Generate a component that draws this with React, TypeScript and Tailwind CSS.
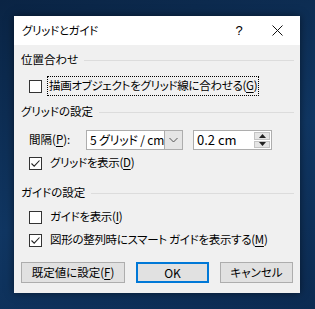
import React from 'react';

const font = "font-['Yu_Gothic_UI','Noto_Sans_CJK_JP',sans-serif] [font-feature-settings:'palt'] whitespace-nowrap";

function Box({ checked }: { checked?: boolean }) {
    return (
        <span className="w-[13px] h-[13px] border border-[#333333] bg-white flex items-center justify-center shrink-0">
            {checked && (
                <svg width="11" height="11" viewBox="0 0 11 11">
                    <path d="M1.5 5.5 L4.2 8.2 L9.5 2.5" fill="none" stroke="#222" strokeWidth="1.1" />
                </svg>
            )}
        </span>
    );
}

function Check({ checked, label, keyChar, focus, className = '' }: { checked?: boolean; label: string; keyChar: string; focus?: boolean; className?: string }) {
    return (
        <div className={`flex items-center h-[20px] pl-[8px] ${className}`}>
            <Box checked={checked} />
            <span className={`ml-[5px] h-[20px] flex items-center px-[2px] tracking-[-0.3px] ${focus ? 'outline outline-1 outline-dotted outline-black -outline-offset-1' : 'border border-transparent'}`}>
                {label}(<span className="underline underline-offset-2">{keyChar}</span>)
            </span>
        </div>
    );
}

function Section({ title, className = '' }: { title: string; className?: string }) {
    return (
        <div className={`flex items-center h-[20px] ${className}`}>
            <span>{title}</span>
            <span className="flex-1 h-px bg-[#dcdcdc] ml-[6px]" />
        </div>
    );
}

export default function App() {
    return (
        <div className={`w-[315px] h-[309px] bg-[linear-gradient(160deg,#0a2444_0%,#103662_55%,#0c2b52_100%)] pt-[16px] pl-[14px] text-[11.5px] text-black ${font}`}>
            <div className="w-[286px] h-[277px] flex flex-col shadow-[0_0_8px_rgba(0,0,0,0.5)]">
                <div className="h-[29px] bg-white flex items-center pl-[8px] shrink-0">
                    <span className="flex-1 tracking-[-0.3px]">グリッドとガイド</span>
                    <span className="w-[30px] text-center font-['Liberation_Sans',sans-serif] text-[13px]">?</span>
                    <span className="w-[46px] flex justify-center">
                        <svg width="11" height="11" viewBox="0 0 11 11">
                            <path d="M0.5 0.5 L10.5 10.5 M10.5 0.5 L0.5 10.5" stroke="#111" strokeWidth="1" />
                        </svg>
                    </span>
                </div>
                <div className="flex-1 bg-[#f0f0f0] pt-[5px] pl-[7px] pr-[6px] flex flex-col">
                    <Section title="位置合わせ" />
                    <Check label="描画オブジェクトをグリッド線に合わせる" keyChar="G" focus className="mt-[6px]" />
                    <Section title="グリッドの設定" className="mt-[6px]" />
                    <div className="flex items-center h-[20px] mt-[8px] pl-[8px]">
                        <span className="w-[57px]">間隔(<span className="underline underline-offset-2">P</span>):</span>
                        <div className="w-[97px] h-[20px] border border-[#adadad] bg-white flex items-stretch">
                            <span className="flex-1 flex items-center pl-[3px] text-[12px] tracking-[-0.2px] overflow-hidden">5 グリッド / cm</span>
                            <span className="w-[18px] shrink-0 bg-[#e5e5e5] border-l border-[#adadad] flex items-center justify-center">
                                <svg width="9" height="6" viewBox="0 0 9 6">
                                    <path d="M0.5 1 L4.5 5 L8.5 1" fill="none" stroke="#555" strokeWidth="1" />
                                </svg>
                            </span>
                        </div>
                        <div className="ml-[10px] w-[79px] h-[20px] border border-[#adadad] bg-white flex items-stretch">
                            <span className="flex-1 flex items-center pl-[3px] text-[13px]">0.2 cm</span>
                            <span className="w-[16px] my-[1px] mr-[1px] flex flex-col gap-px">
                                <span className="flex-1 bg-[#e5e5e5] border border-[#c4c4c4] flex items-center justify-center">
                                    <svg width="7" height="4" viewBox="0 0 7 4"><path d="M3.5 0 L7 4 L0 4 Z" fill="#222" /></svg>
                                </span>
                                <span className="flex-1 bg-[#e5e5e5] border border-[#c4c4c4] flex items-center justify-center">
                                    <svg width="7" height="4" viewBox="0 0 7 4"><path d="M0 0 L7 0 L3.5 4 Z" fill="#222" /></svg>
                                </span>
                            </span>
                        </div>
                    </div>
                    <Check checked label="グリッドを表示" keyChar="D" className="mt-[3px]" />
                    <Section title="ガイドの設定" className="mt-[10px]" />
                    <Check label="ガイドを表示" keyChar="I" className="mt-[4px]" />
                    <Check checked label="図形の整列時にスマート ガイドを表示する" keyChar="M" className="mt-[3px]" />
                    <div className="flex mt-[12px] gap-[11px] h-[21px]">
                        <button className="w-[104px] bg-[#e1e1e1] border border-[#adadad] flex items-center justify-center">
                            既定値に設定(<span className="underline underline-offset-2">F</span>)
                        </button>
                        <button className="w-[73px] bg-[#e1e1e1] border-2 border-[#0078d7] flex items-center justify-center text-[12px]">OK</button>
                        <button className="w-[73px] bg-[#e1e1e1] border border-[#adadad] flex items-center justify-center">キャンセル</button>
                    </div>
                </div>
            </div>
        </div>
    );
}
